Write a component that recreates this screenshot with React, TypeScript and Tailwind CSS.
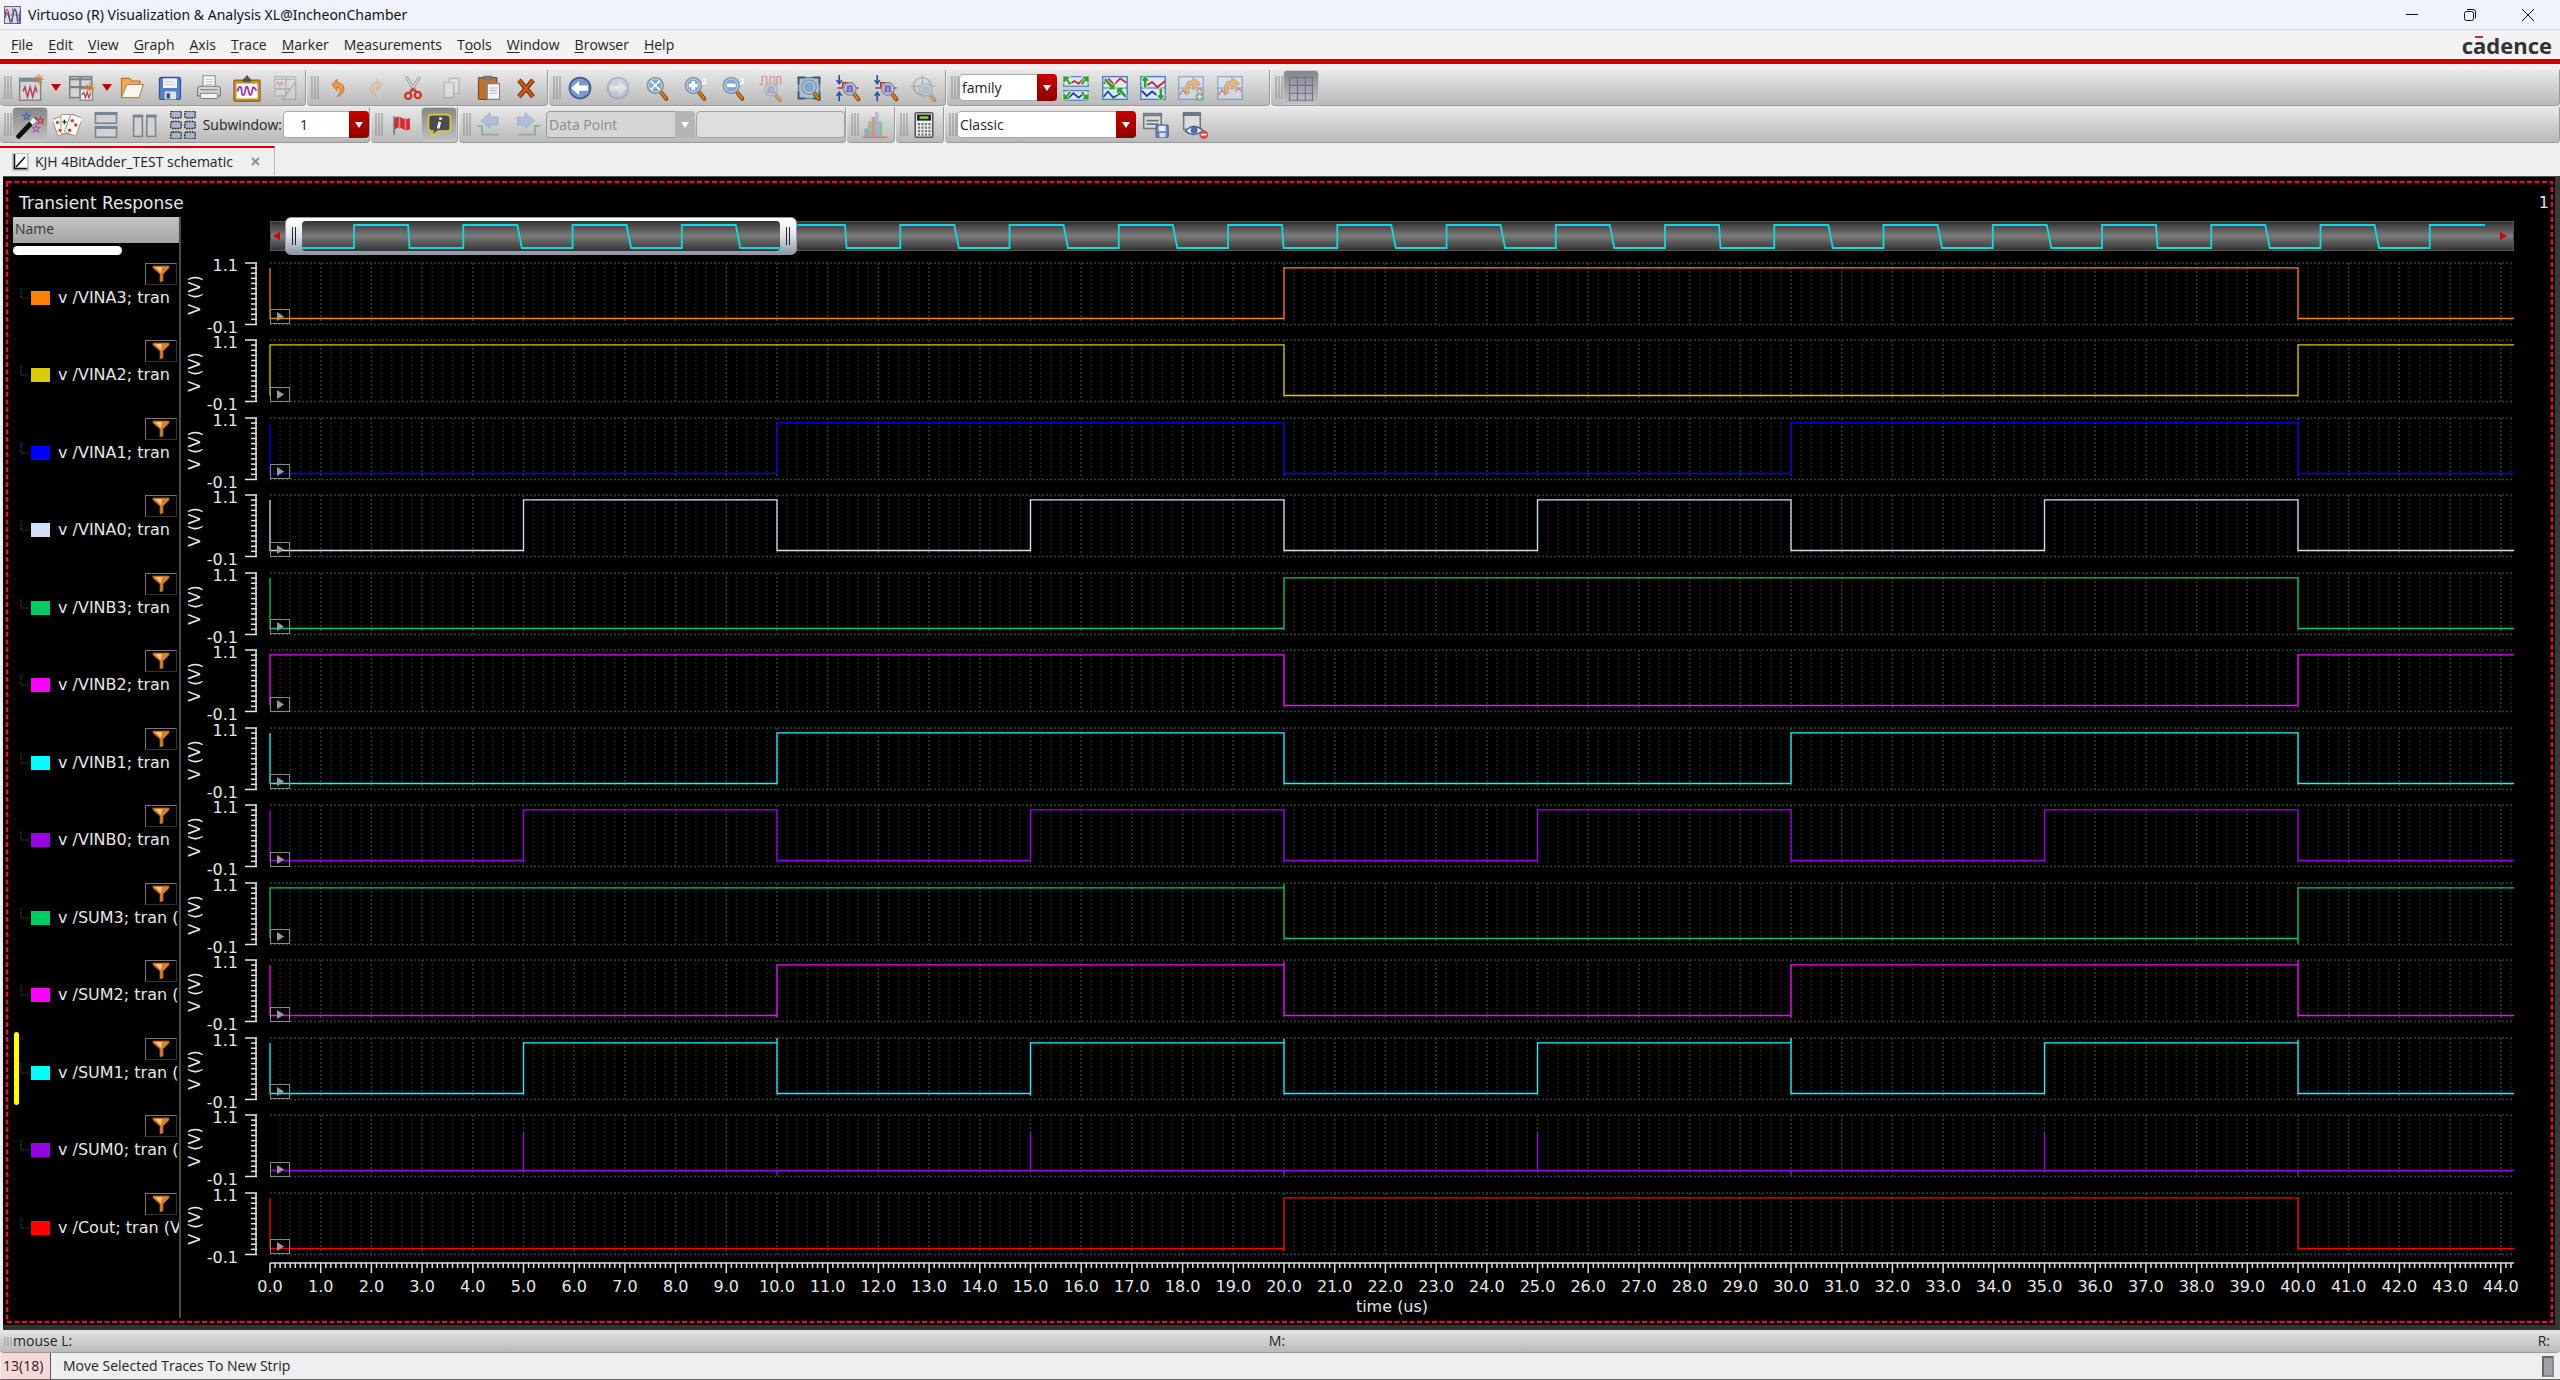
import React from 'react';

const SPAN = 44.26;

const menus = [
  ['', 'F', 'ile'],
  ['', 'E', 'dit'],
  ['', 'V', 'iew'],
  ['', 'G', 'raph'],
  ['', 'A', 'xis'],
  ['', 'T', 'race'],
  ['', 'M', 'arker'],
  ['M', 'e', 'asurements'],
  ['T', 'o', 'ols'],
  ['', 'W', 'indow'],
  ['', 'B', 'rowser'],
  ['', 'H', 'elp'],
];

type Signal = {
  name: string;
  color: string;
  start: 0 | 1;
  edges: number[];
  // [time, y from, y to]
  glitches?: number[][];
  selected?: boolean;
};

const by20 = [20, 40];
const by10 = [10, 20, 30, 40];
const by5 = [5, 10, 15, 20, 25, 30, 35, 40];

const signals: Signal[] = [
  { name: 'v /VINA3; tran', color: '#ff8000', start: 0, edges: by20 },
  { name: 'v /VINA2; tran', color: '#d8cc00', start: 1, edges: by20 },
  { name: 'v /VINA1; tran', color: '#0000ff', start: 0, edges: by10 },
  { name: 'v /VINA0; tran', color: '#d4e0f8', start: 0, edges: by5 },
  { name: 'v /VINB3; tran', color: '#00cc66', start: 0, edges: by20 },
  { name: 'v /VINB2; tran', color: '#ff00ff', start: 1, edges: by20 },
  { name: 'v /VINB1; tran', color: '#00ffff', start: 0, edges: by10 },
  { name: 'v /VINB0; tran', color: '#9900e6', start: 0, edges: by5 },
  { name: 'v /SUM3; tran (V)', color: '#00cc66', start: 1, edges: by20, glitches: [[20, 1, 56], [40, 5, 61]] },
  { name: 'v /SUM2; tran (V)', color: '#ff00ff', start: 0, edges: by10, glitches: [[10, 5, 58], [20, 2, 56], [30, 5, 58], [40, 0, 56]] },
  { name: 'v /SUM1; tran (V)', color: '#00ffff', start: 0, edges: by5, selected: true, glitches: [[10, 0, 56], [15, 5, 58], [20, 1, 56], [30, 0, 56], [40, 2, 56]] },
  { name: 'v /SUM0; tran (V)', color: '#9900e6', start: 0, edges: [], glitches: [[5, 18, 56], [10, 56, 61], [15, 18, 56], [20, 56, 61], [25, 18, 56], [30, 56, 61], [35, 18, 56], [40, 56, 61]] },
  { name: 'v /Cout; tran (V)', color: '#ff0000', start: 0, edges: by20, glitches: [[20, 5, 59]] },
];

const Lens = ({ cx = 14, cy = 13, r = 9, children }: { cx?: number; cy?: number; r?: number; children?: React.ReactNode }) => (
  <>
    <path d={`M${cx + r * 0.7} ${cy + r * 0.8}L${cx + r * 1.4} ${cy + r * 1.7}`} stroke="#7a3d05" strokeWidth="4.5" strokeLinecap="round" />
    <path d={`M${cx + r * 0.75} ${cy + r * 0.85}L${cx + r * 1.35} ${cy + r * 1.65}`} stroke="#d9831f" strokeWidth="2.5" strokeLinecap="round" />
    <circle cx={cx} cy={cy} r={r} fill="#7fa6cf" stroke="#8a949e" strokeWidth="2" />
    <circle cx={cx} cy={cy} r={r - 1.5} fill="none" stroke="#d8e6f4" strokeWidth="1" />
    {children}
  </>
);

const Star = ({ x, y, c, r = 4 }: { x: number; y: number; c: string; r?: number }) => (
  <path
    transform={`translate(${x} ${y}) scale(${r / 4})`}
    d="M0-4L1.1-1.2 4-1.2 1.8.7 2.6 3.6 0 1.9-2.6 3.6-1.8.7-4-1.2-1.1-1.2Z"
    fill="none" stroke={c} strokeWidth="1.3"
  />
);

const Burst = ({ x, y }: { x: number; y: number }) => (
  <path transform={`translate(${x} ${y})`} d="M0-6V6M-6 0H6M-4-4L4 4M4-4L-4 4" stroke="#d97b2e" strokeWidth="1.2" />
);

const WavePanel = () => (
  <>
    <rect x="2" y="3" width="28" height="26" fill="#d9e8fb" stroke="#4d7fc4" strokeWidth="1.6" />
    <path d="M2 16H30" stroke="#4d7fc4" strokeWidth="1.4" />
  </>
);

const icons: Record<string, React.ReactNode> = {
  newWindow: (
    <>
      <rect x="3" y="5" width="24" height="25" fill="#d5d5d5" stroke="#7b8289" strokeWidth="1.6" />
      <rect x="3" y="5" width="24" height="4" fill="#7b8b98" />
      <path d="M7 20l2-5 3 11 3-11 3 11 3-11 2 6" fill="none" stroke="#b6405f" strokeWidth="1.8" />
      <Burst x={25} y={6} />
    </>
  ),
  newSub: (
    <>
      <rect x="2" y="3" width="25" height="24" fill="#d5d5d5" stroke="#7b8289" strokeWidth="1.8" />
      <path d="M2 6H27M2 15H27M14 3V27" stroke="#7b8289" strokeWidth="2.4" />
      <rect x="14" y="17" width="14" height="13" fill="#ececec" stroke="#7b8289" strokeWidth="1.4" />
      <path d="M16 24l2-3 2 6 2-6 2 6 2-5" fill="none" stroke="#b6405f" strokeWidth="1.5" />
      <Burst x={25} y={16} />
    </>
  ),
  open: (
    <>
      <path d="M4 26V5h9l3 3h9v5" fill="#f0aa55" stroke="#c0701c" strokeWidth="1.4" />
      <path d="M4 27L10 12H29L24 27Z" fill="#fbf7ef" stroke="#a98a62" strokeWidth="1.3" />
    </>
  ),
  save: (
    <>
      <rect x="4" y="4" width="24" height="25" rx="2" fill="#5b7fc4" stroke="#35539a" strokeWidth="1.5" />
      <rect x="8" y="5" width="16" height="11" fill="#f2f5fb" />
      <path d="M10 9H22M10 12H22" stroke="#c0c8da" />
      <rect x="10" y="20" width="13" height="9" fill="#dfe4ee" />
      <rect x="12" y="22" width="4" height="6" fill="#35539a" />
    </>
  ),
  print: (
    <>
      <path d="M9 16V2H23V16" fill="#fafafa" stroke="#8b8b8b" strokeWidth="1.3" />
      <path d="M12 6H20M12 9H20M12 12H20" stroke="#b4b4b4" />
      <path d="M3 17Q3 14 7 14H25Q29 14 29 17V25H3Z" fill="#d5d5d5" stroke="#7a7a7a" strokeWidth="1.4" />
      <rect x="6" y="22" width="20" height="6" rx="2" fill="#f4f4f4" stroke="#7a7a7a" strokeWidth="1.2" />
      <path d="M6 18H26" stroke="#8b8b8b" strokeWidth="1.4" />
    </>
  ),
  clipWave: (
    <>
      <rect x="1" y="7" width="30" height="24" rx="1" fill="#c98f2b" stroke="#8a5c12" strokeWidth="1.2" />
      <rect x="4" y="11" width="24" height="17" fill="#fff" />
      <path d="M11 9Q11 5 14 4 16-1 18 4 21 5 21 9Z" fill="#555" />
      <path d="M5 20c2-9 5-5 5 0s3 6 4-1 3-5 4 1 3 5 4-1 2-4 5 0" fill="none" stroke="#a03fae" strokeWidth="2.2" />
    </>
  ),
  editOff: (
    <g opacity="0.5">
      <rect x="3" y="3" width="24" height="22" fill="#e0e0e0" stroke="#999" strokeWidth="1.4" />
      <path d="M3 6H27M3 17H27M16 3V25" stroke="#999" strokeWidth="1.8" />
      <path d="M5 12l2-3 2 5 2-5 2 4" fill="none" stroke="#c65a74" strokeWidth="1.3" />
      <path d="M12 29L27 9V29Z" fill="#d8d8d8" stroke="#8a8a8a" strokeWidth="1.4" />
    </g>
  ),
  undo: <path d="M9 12L15 6V10C25 10 26 22 15 26 21 20 19 15 15 15V19Z" fill="#f0994a" stroke="#c76a1a" strokeWidth="1" />,
  redo: <path opacity="0.45" d="M23 12L17 6V10C7 10 6 22 17 26 11 20 13 15 17 15V19Z" fill="#f0b482" stroke="#d08a55" strokeWidth="1" />,
  cut: (
    <>
      <path d="M8 3L19 20M24 3L13 20" stroke="#8f9499" strokeWidth="3.4" />
      <path d="M8 3L19 20M24 3L13 20" stroke="#e6e8ea" strokeWidth="1.4" />
      <circle cx="10.5" cy="25" r="3.5" fill="none" stroke="#d03025" strokeWidth="2.6" />
      <circle cx="21.5" cy="24" r="3.5" fill="none" stroke="#d03025" strokeWidth="2.6" />
      <path d="M12 22L16 17L20 21" stroke="#d03025" strokeWidth="2.4" fill="none" />
    </>
  ),
  copy: (
    <g opacity="0.55">
      <path d="M14 5H25V22H14Z" fill="#e9e9e9" stroke="#999" strokeWidth="1.4" />
      <path d="M8 10H19V27H8Z" fill="#e9e9e9" stroke="#999" strokeWidth="1.4" />
    </g>
  ),
  paste: (
    <>
      <rect x="4" y="4" width="21" height="25" rx="1" fill="#b87430" stroke="#7d4b17" strokeWidth="1.4" />
      <rect x="9" y="2" width="11" height="5" rx="1" fill="#777" />
      <path d="M14 11H28V29H14Z" fill="#f5f5f5" stroke="#808080" strokeWidth="1.2" />
      <path d="M17 16H25M17 19H25M17 22H25" stroke="#aaa" />
    </>
  ),
  remove: (
    <>
      <path d="M8 7L24 26M24 7L8 26" stroke="#7c2d08" strokeWidth="5.5" />
      <path d="M8 7L24 26M24 7L8 26" stroke="#c85a1c" strokeWidth="3" />
    </>
  ),
  back: (
    <>
      <circle cx="16" cy="16" r="12" fill="#7f98c6" stroke="#3f5d98" strokeWidth="2" />
      <path d="M6 16L15 8V13H25V19H15V24Z" fill="#fff" />
    </>
  ),
  forward: (
    <g opacity="0.4">
      <circle cx="16" cy="16" r="12" fill="#b4c2dc" stroke="#6c83b0" strokeWidth="2" />
      <path d="M26 16L17 8V13H7V19H17V24Z" fill="#fff" />
    </g>
  ),
  zoomFit: (
    <Lens>
      <path d="M9 8L12 11M19 8L16 11M9 18L12 15M19 18L16 15" stroke="#fff" strokeWidth="2.2" />
      <rect x="12" y="11" width="4" height="4" fill="#fff" />
    </Lens>
  ),
  zoomIn: (
    <>
      <Lens><path d="M14 8V18M9 13H19" stroke="#fff" strokeWidth="4" /></Lens>
      <path d="M25 6Q29 4 28 8L25 11H29" fill="none" stroke="#fff" strokeWidth="1.5" />
    </>
  ),
  zoomOut: (
    <>
      <Lens><path d="M9 13H19" stroke="#fff" strokeWidth="4" /></Lens>
      <path d="M25 6Q29 4 28 8L25 11H29" fill="none" stroke="#fff" strokeWidth="1.5" />
    </>
  ),
  zoomWaveOff: (
    <g opacity="0.45">
      <path d="M3 12H6V3H11V12H15V3H20V12H23V3H27V12" fill="none" stroke="#c64a4a" strokeWidth="1.6" />
      <Lens cx={16} cy={18} r={7}><path d="M12 21H14V15H18V21H20" fill="none" stroke="#c64a8a" strokeWidth="1.4" /></Lens>
    </g>
  ),
  zoomBox: (
    <>
      <rect x="4" y="4" width="24" height="24" fill="#aebfd2" />
      <path d="M4 12V4H12M20 4H28V12M28 20V28H20M12 28H4V20" fill="none" stroke="#3c536d" strokeWidth="2.2" />
      <path d="M9 4H23M4 9V23M28 9V23M9 28H23" stroke="#5a718b" strokeWidth="1.4" />
      <Lens cx={16} cy={15} r={8} />
    </>
  ),
  zoomY: (
    <>
      <path d="M6 1V9M3 7L6 11L9 7M6 31V23M3 25L6 21L9 25" fill="none" stroke="#17509c" strokeWidth="1.8" />
      <path d="M4 16H10V10H20V16H28" fill="none" stroke="#c22a2a" strokeWidth="1.8" />
      <Lens cx={18} cy={17} r={7}><path d="M14 20H16V14H20V20H22" fill="none" stroke="#b02fa0" strokeWidth="1.4" /></Lens>
    </>
  ),
  zoomTarget: (
    <g opacity="0.42">
      <circle cx="14" cy="14" r="10" fill="none" stroke="#777" strokeWidth="1.8" />
      <path d="M14 1V28M1 14H28" stroke="#777" strokeWidth="1.6" />
      <Lens cx={18} cy={18} r={7} />
    </g>
  ),
  expand: (
    <>
      <rect x="2" y="3" width="28" height="11" fill="#d9e8fb" stroke="#4d7fc4" strokeWidth="1.4" />
      <rect x="2" y="19" width="28" height="11" fill="#d9e8fb" stroke="#4d7fc4" strokeWidth="1.4" />
      <path d="M8 12L14 8L19 11L24 6" fill="none" stroke="#d32432" strokeWidth="2" />
      <path d="M8 27L13 22L19 27L24 23" fill="none" stroke="#1f3f95" strokeWidth="2" />
      <path d="M1 2L10 3L7 6L11 11L8 13L5 8L1 11ZM31 2L22 3L25 6L21 11L24 13L27 8L31 11ZM1 30L10 29L7 26L11 21L8 19L5 24L1 21ZM31 30L22 29L25 26L21 21L24 19L27 24L31 21Z" fill="#2fa32a" stroke="#eafbe8" strokeWidth="0.8" />
    </>
  ),
  merge: (
    <>
      <WavePanel />
      <path d="M3 11L9 6L15 12L22 5L29 10" fill="none" stroke="#d32432" strokeWidth="2" />
      <path d="M3 26L8 20L14 27L22 22L29 26" fill="none" stroke="#1f3f95" strokeWidth="2" />
      <path d="M5 4L13 12L16 9V18H7L10 15L3 7ZM28 28L21 21L18 24V15H27L24 18L30 25Z" fill="#2fa32a" stroke="#eafbe8" strokeWidth="0.8" />
    </>
  ),
  split: (
    <>
      <WavePanel />
      <path d="M9 13L15 9L21 15L30 8" fill="none" stroke="#d32432" strokeWidth="2.2" />
      <path d="M3 19L9 25L15 20L20 24" fill="none" stroke="#1f3f95" strokeWidth="2.2" />
      <path d="M7 1L12 8H9V16H5V8H2ZM25 31L20 24H23V16H27V24H30Z" fill="#2fa32a" stroke="#eafbe8" strokeWidth="0.8" />
    </>
  ),
  addStrip: (
    <g opacity="0.5">
      <WavePanel />
      <path d="M3 24L7 18L11 24M22 20L26 16L29 20" fill="none" stroke="#c03a4a" strokeWidth="1.6" />
      <path d="M10 22Q8 6 18 8V3L27 11L18 18V13Q12 12 14 22Z" fill="#e8962f" stroke="#b86a15" />
      <circle cx="26" cy="26" r="5" fill="#3d9a3a" />
      <path d="M26 23V29M23 26H29" stroke="#fff" strokeWidth="1.8" />
    </g>
  ),
  redoStrip: (
    <g opacity="0.5">
      <WavePanel />
      <path d="M3 24L7 18L11 24M22 20L26 16L29 20" fill="none" stroke="#c03a4a" strokeWidth="1.6" />
      <path d="M10 22Q8 6 18 8V3L27 11L18 18V13Q12 12 14 22Z" fill="#e8962f" stroke="#b86a15" />
    </g>
  ),
  grid: <path d="M3 3V31M12 3V31M21 3V31M29 3V31M2 4H30M2 13H30M2 22H30M2 30H30" stroke="#6c6c9c" strokeWidth="1.2" />,
  wand: (
    <>
      <path d="M3 29L21 10" stroke="#111" strokeWidth="5.5" strokeLinecap="round" />
      <path d="M17 14L22 9" stroke="#eee" strokeWidth="5.5" />
      <Star x={12} y={6} c="#3b63c9" />
      <Star x={28} y={11} c="#d33a4a" />
      <Star x={23} y={20} c="#b34fc0" />
    </>
  ),
  cards: (
    <>
      <rect x="2" y="7" width="14" height="20" rx="1" transform="rotate(-20 9 17)" fill="#fbfaf4" stroke="#8d8d80" />
      <rect x="9" y="4" width="15" height="22" rx="1" fill="#fbfaf4" stroke="#8d8d80" />
      <rect x="16" y="5" width="14" height="22" rx="1" transform="rotate(20 23 17)" fill="#fbfaf4" stroke="#8d8d80" />
      <circle cx="5" cy="13" r="1.8" fill="#d43c35" />
      <circle cx="8" cy="22" r="1.8" fill="#d43c35" />
      <path d="M13 10V15M11 12.5H15.500" stroke="#222" strokeWidth="1.4" />
      <circle cx="22" cy="11" r="2" fill="#d43c35" />
      <circle cx="26" cy="16" r="2" fill="#d43c35" />
      <circle cx="19" cy="22" r="2" fill="#d43c35" />
    </>
  ),
  rows: (
    <>
      <rect x="4" y="2" width="24" height="12" fill="#d2d2d2" stroke="#7c858d" strokeWidth="1.8" />
      <rect x="4" y="18" width="24" height="12" fill="#d2d2d2" stroke="#7c858d" strokeWidth="1.8" />
      <path d="M3 3H29M3 19H29" stroke="#71869a" strokeWidth="3" />
    </>
  ),
  columns: (
    <>
      <rect x="3" y="5" width="10" height="24" fill="#d2d2d2" stroke="#7c858d" strokeWidth="1.8" />
      <rect x="18" y="5" width="10" height="24" fill="#d2d2d2" stroke="#7c858d" strokeWidth="1.8" />
      <path d="M2 6H14M17 6H29" stroke="#71869a" strokeWidth="3" />
    </>
  ),
  tiles: (
    <>
      {[0, 12, 24].map((y) => [2, 18].map((x) => (
        <rect key={`${x}-${y}`} x={x} y={y} width="12" height="8" rx="2" fill="#a9b4cb" stroke="#222" strokeWidth="1.5" strokeDasharray="2 1" />
      )))}
    </>
  ),
  flag: (
    <>
      <path d="M7 6V27" stroke="#777" strokeWidth="2" />
      <path d="M8 8Q12 5 16 8T25 8V21Q20 23 16 20T8 21Z" fill="#d02c33" />
      <path d="M13 7V20M20 8V21" stroke="#ea7a7d" strokeWidth="2" />
    </>
  ),
  info: (
    <>
      <path d="M8 4H25Q29 4 29 8V19Q29 23 25 23H15L7 29L9 23Q4 23 4 19V8Q4 4 8 4Z" fill="#4b4b4b" stroke="#d8cb35" strokeWidth="2" />
      <path d="M18 7.500L17.400 10M17 12.500L15 20" stroke="#fff" strokeWidth="3" />
    </>
  ),
  prevPoint: (
    <g opacity="0.65">
      <path d="M6 11L16 2V7H25V16H16V20Z" fill="#9fb0d8" stroke="#7e92c2" />
      <path d="M1 17H7V27H26" fill="none" stroke="#5eae66" strokeWidth="2" />
    </g>
  ),
  nextPoint: (
    <g opacity="0.65">
      <path d="M24 11L14 2V7H5V16H14V20Z" fill="#9fb0d8" stroke="#7e92c2" />
      <path d="M31 17H25V27H6" fill="none" stroke="#5eae66" strokeWidth="2" />
    </g>
  ),
  histogram: (
    <g opacity="0.5">
      <rect x="4" y="20" width="4" height="9" fill="#6b7fd0" />
      <rect x="8" y="12" width="4" height="17" fill="#54b860" />
      <rect x="12" y="7" width="4" height="22" fill="#d65a5a" />
      <rect x="16" y="1" width="4" height="28" fill="#8a94d8" />
      <rect x="20" y="12" width="4" height="17" fill="#54b860" />
      <path d="M2 30H30" stroke="#c44" strokeWidth="2" />
    </g>
  ),
  calculator: (
    <>
      <rect x="6" y="2" width="20" height="28" rx="1" fill="#efefef" stroke="#555" strokeWidth="1.8" />
      <rect x="8" y="4" width="16" height="7" fill="#222" />
      <path d="M11 6H21V9H11Z" fill="#7fd02a" />
      <path d="M9 15H24M9 19H24M9 23H24M9 27H24" stroke="#777" strokeWidth="2.5" strokeDasharray="2.5 1.5" />
    </>
  ),
  saveSet: (
    <>
      <rect x="2" y="3" width="20" height="17" fill="#dcdcdc" stroke="#777" strokeWidth="1.8" />
      <path d="M2 5H22M5 11H19M5 15H19" stroke="#6b7680" strokeWidth="2.2" />
      <rect x="16" y="16" width="14" height="14" rx="1" fill="#6f80b4" stroke="#44558c" />
      <rect x="19" y="17" width="8" height="6" fill="#e8ecf6" />
      <rect x="20" y="25" width="7" height="5" fill="#d7dcea" />
    </>
  ),
  hideSet: (
    <>
      <rect x="3" y="2" width="19" height="19" fill="#dcdcdc" stroke="#777" strokeWidth="1.8" />
      <path d="M2 4H23" stroke="#66788a" strokeWidth="3.5" />
      <path d="M5 23Q14 13 25 22Q15 31 5 23Z" fill="#f4f6fa" stroke="#3f5d98" strokeWidth="1.6" />
      <circle cx="15" cy="22" r="4" fill="#4d6cab" />
      <circle cx="26" cy="27" r="5" fill="#d94a4a" />
      <path d="M23 27H29" stroke="#fff" strokeWidth="2" />
    </>
  ),
};

const Tool = ({ name, label, pressed = false }: { name: string; label: string; pressed?: boolean }) => (
  <button
    type="button"
    aria-label={label}
    className={pressed
      ? 'flex h-[35px] w-9 shrink-0 items-center justify-center rounded-sm border border-[#c9c9c9] bg-linear-to-b from-[#878787] to-[#c2c2c2]'
      : 'flex h-[35px] min-w-0 flex-1 items-center justify-center'}
  >
    <svg viewBox="0 0 32 32" className="h-7 w-7" fill="none">{icons[name]}</svg>
  </button>
);

const Drop = ({ label }: { label: string }) => (
  <button type="button" aria-label={label} className="flex h-[35px] w-3 shrink-0 items-center justify-center">
    <svg viewBox="0 0 10 7" className="h-[7px] w-[10px]"><path d="M0 0H10L5 7Z" fill="#c00000" /></svg>
  </button>
);

const Group = ({ size, children }: { size: string; children?: React.ReactNode }) => (
  <div className={`flex h-9 items-center rounded-b border-r border-b border-[#999] bg-linear-to-b from-[#e9e9e9] to-[#b9b9b9] pl-1 ${size}`}>
    <svg viewBox="0 0 8 23" className="h-[23px] w-2 shrink-0"><path d="M1 0V23M4 0V23M7 0V23" stroke="#8d8d8d" /></svg>
    {children}
  </div>
);

const Combo = ({ label, value, size, indent = 'pl-[2px]', disabled = false }: { label: string; value: string; size: string; indent?: string; disabled?: boolean }) => (
  <div className={`relative h-[27px] shrink-0 ${size}`}>
    <select
      aria-label={label}
      disabled={disabled}
      className={`h-full w-full appearance-none rounded border text-sm ${indent} ${disabled ? 'border-[#999] bg-[#d6d6d6] text-[#8a8a8a]' : 'border-[#aaa] bg-white text-[#222]'}`}
    >
      <option>{value}</option>
    </select>
    <span className={`pointer-events-none absolute inset-y-0 right-0 flex w-5 items-center justify-center rounded-r ${disabled ? 'bg-[#b5b5b5]' : 'bg-linear-to-b from-[#c80000] to-[#8e0000]'}`}>
      <svg viewBox="0 0 8 6" className="h-[6px] w-2"><path d="M0 0H8L4 6Z" fill="#fff" /></svg>
    </span>
  </div>
);

const Toolbars = () => (
  <div className="flex flex-col gap-px bg-[#efefef] pt-[6px] pb-[3px]">
    <div className="flex gap-px">
      <Group size="w-[306px]">
        <Tool name="newWindow" label="New window" />
        <Drop label="New window options" />
        <Tool name="newSub" label="New subwindow" />
        <Drop label="New subwindow options" />
        <Tool name="open" label="Open" />
        <Tool name="save" label="Save" />
        <Tool name="print" label="Print" />
        <Tool name="clipWave" label="Save image" />
        <Tool name="editOff" label="Edit graph" />
      </Group>
      <Group size="w-[241px] pr-[2px]">
        <Tool name="undo" label="Undo" />
        <Tool name="redo" label="Redo" />
        <Tool name="cut" label="Cut" />
        <Tool name="copy" label="Copy" />
        <Tool name="paste" label="Paste" />
        <Tool name="remove" label="Delete" />
      </Group>
      <Group size="w-[397px] pr-[2px]">
        <Tool name="back" label="Previous view" />
        <Tool name="forward" label="Next view" />
        <Tool name="zoomFit" label="Fit" />
        <Tool name="zoomIn" label="Zoom in" />
        <Tool name="zoomOut" label="Zoom out" />
        <Tool name="zoomWaveOff" label="Zoom trace" />
        <Tool name="zoomBox" label="Zoom area" />
        <Tool name="zoomY" label="Zoom Y" />
        <Tool name="zoomY" label="Zoom Y to data" />
        <Tool name="zoomTarget" label="Zoom to marker" />
      </Group>
      <Group size="w-[323px] pr-5">
        <Combo label="Strip mode" value="family" size="w-[98px]" />
        <Tool name="expand" label="Split all strips" />
        <Tool name="merge" label="Combine strips" />
        <Tool name="split" label="Split current strip" />
        <Tool name="addStrip" label="Copy to new strip" />
        <Tool name="redoStrip" label="Move to new strip" />
      </Group>
      <Group size="flex-1">
        <Tool name="grid" label="Grid" pressed />
      </Group>
    </div>
    <div className="flex gap-px">
      <Group size="w-[370px]">
        <Tool name="wand" label="Auto layout" pressed />
        <Tool name="cards" label="Card layout" />
        <Tool name="rows" label="Horizontal layout" />
        <Tool name="columns" label="Vertical layout" />
        <Tool name="tiles" label="Grid layout" />
        <span className="mr-px text-sm text-[#222]">Subwindow:</span>
        <Combo label="Subwindow" value="1" size="w-[86px]" indent="pl-4" />
      </Group>
      <Group size="w-[87px]">
        <Tool name="flag" label="Marker" />
        <Tool name="info" label="Info balloon" pressed />
      </Group>
      <Group size="w-[387px]">
        <Tool name="prevPoint" label="Previous point" />
        <Tool name="nextPoint" label="Next point" />
        <Combo label="Point type" value="Data Point" size="w-[149px]" disabled />
        <input aria-label="Point value" disabled className="ml-px h-[27px] w-[149px] rounded border border-[#a5a5a5] bg-[#dedede]" />
      </Group>
      <Group size="w-12 pr-1">
        <Tool name="histogram" label="Histogram" />
      </Group>
      <Group size="w-12 pr-1">
        <Tool name="calculator" label="Calculator" />
      </Group>
      <Group size="flex-1">
        <Combo label="Workspace" value="Classic" size="w-[179px]" />
        <div className="flex w-[78px]">
          <Tool name="saveSet" label="Save workspace" />
          <Tool name="hideSet" label="Hide assistants" />
        </div>
      </Group>
    </div>
  </div>
);

// square wave, x in microseconds and y in strip units
const tracePath = (s: Signal) => {
  let level = s.start;
  const y = (l: number) => (l ? 5 : 56);
  let d = `M0 ${s.start ? 56 : 5}V${y(level)}`;
  if (s.name.includes('SUM0')) d = 'M0 56';
  s.edges.forEach((t) => {
    level = level ? 0 : 1;
    d += `H${t}V${y(level)}`;
  });
  d += `H${SPAN}`;
  (s.glitches ?? []).forEach(([t, a, b]) => {
    d += `M${t} ${a}V${b}`;
  });
  return d;
};

const gridPath = (major: boolean) => {
  let d = '';
  for (let i = 1; i * 0.2 < SPAN; i++) {
    if ((i % 5 === 0) === major) d += `M${(i * 0.2).toFixed(1)} 0V62`;
  }
  return d;
};

const Strip = ({ signal }: { signal: Signal }) => (
  <div className="flex min-h-14 flex-1 py-2">
    <div className="relative w-[88px] shrink-0">
      <svg className="absolute inset-0 h-full w-full overflow-visible font-['DejaVu_Sans',sans-serif] text-base" fill="#e6e6e6">
        <svg x="12" y="52%" className="overflow-visible">
          <text transform="rotate(-90)" textAnchor="middle" dominantBaseline="central">V (V)</text>
        </svg>
        <text x="56" y="2" textAnchor="end" dominantBaseline="central">1.1</text>
        <text x="56" y="100%" dy="3" textAnchor="end" dominantBaseline="central">-0.1</text>
        <g stroke="#e6e6e6" strokeWidth="1.5">
          <line x1="74" x2="74" y1="0" y2="100%" />
          {Array.from({ length: 13 }, (_, i) => (
            <line key={i} x1={i % 12 === 0 ? 63 : 69} x2="75" y1={`${(i / 12) * 100}%`} y2={`${(i / 12) * 100}%`} />
          ))}
        </g>
      </svg>
    </div>
    <div className="relative min-w-0 flex-1">
      <svg viewBox={`0 0 ${SPAN} 62`} preserveAspectRatio="none" className="absolute inset-0 h-full w-full overflow-visible" fill="none">
        <g strokeDasharray="2 2">
          <path d={gridPath(false)} stroke="#1e1e1e" strokeWidth="1.5" vectorEffect="non-scaling-stroke" />
          <path d={gridPath(true)} stroke="#383838" strokeWidth="1.5" vectorEffect="non-scaling-stroke" />
          <path d={`M0 0H${SPAN}M0 62H${SPAN}`} stroke="#3c3c3c" strokeWidth="1.5" vectorEffect="non-scaling-stroke" />
        </g>
        <path d={tracePath(signal)} stroke={signal.color} strokeWidth="1.3" vectorEffect="non-scaling-stroke" />
      </svg>
      <button type="button" aria-label="Expand strip" className="absolute bottom-0 left-0 flex h-[15px] w-5 items-center justify-center border border-[#888] pl-px">
        <svg viewBox="0 0 7 9" className="h-[9px] w-[7px]"><path d="M0 0L7 4.500L0 9Z" fill="#999" /></svg>
      </button>
    </div>
  </div>
);

const overviewPath = () => {
  let d = 'M31 27';
  for (let i = 0; i < 20; i++) {
    const rise = 84 + i * 109.2;
    d += `H${rise}V4`;
    if (i < 19) d += `H${rise + 54}L${rise + (i % 4 === 0 ? 55.5 : 58.5)} 27`;
  }
  return `${d}H2214`;
};

const Handle = () => (
  <span className="flex w-4 items-center justify-center gap-[2px]">
    <span className="h-[18px] w-px bg-[#222]" />
    <span className="h-[18px] w-px bg-[#222]" />
  </span>
);

const Overview = () => (
  <div className="relative mr-[41px] ml-[88px] h-[38px] py-1">
    <div className="h-[30px] border border-[#555] bg-linear-to-b from-[#333] via-[#7c7c7c] to-[#333]" />
    <div className="absolute inset-y-0 left-[15px] flex w-[22.8%] justify-between rounded-md border border-[#99a] bg-linear-to-b from-white via-[#dfe3ea] to-[#8c96a4]">
      <Handle />
      <div className="my-[3px] flex-1 rounded-sm bg-linear-to-b from-[#333] via-[#7c7c7c] to-[#333]" />
      <Handle />
    </div>
    <svg viewBox="0 0 2243 30" preserveAspectRatio="none" className="absolute top-1 left-0 h-[30px] w-full" fill="none">
      <defs>
        <clipPath id="outside-handles">
          <path d="M30 0H511V30H30ZM527 0H2243V30H527Z" />
        </clipPath>
      </defs>
      <path d={overviewPath()} stroke="#10dada" strokeWidth="1.8" clipPath="url(#outside-handles)" />
      <path d="M3 15L10 11V19ZM2236 15L2229 11V19Z" fill="#d00000" />
    </svg>
  </div>
);

const TimeAxis = () => {
  const at = (t: number) => `${(t / SPAN) * 100}%`;
  return (
    <svg className="mr-[41px] ml-[88px] block h-14 w-[calc(100%-129px)] overflow-visible font-['DejaVu_Sans',sans-serif] text-base" fill="#e6e6e6">
      <g stroke="#e0e0e0" strokeWidth="1.5">
        <line x1="0" x2="100%" y1="1" y2="1" />
        {Array.from({ length: 443 }, (_, i) => (
          <line key={i} x1={at(i / 10)} x2={at(i / 10)} y1="1" y2={i % 10 === 0 ? 11 : 6} />
        ))}
      </g>
      {Array.from({ length: 45 }, (_, i) => (
        <text key={i} x={at(i)} y="30" textAnchor="middle">{i.toFixed(1)}</text>
      ))}
      <text x="50%" y="50" textAnchor="middle">time (us)</text>
    </svg>
  );
};

const NamePanel = () => (
  <div className="flex w-[168px] shrink-0 flex-col border-r-2 border-[#4a4a4a]">
    <div className="flex h-[26px] items-center bg-linear-to-b from-[#c4c4c4] to-[#a4a4a4] pb-[2px] pl-[2px] text-sm text-[#333]">Name</div>
    <div className="mt-[3px] h-[9px] w-[109px] rounded-full bg-white" />
    <ul className="flex flex-1 flex-col">
      {signals.map((s) => (
        <li key={s.name} className="relative flex min-h-14 flex-1 flex-col pt-2">
          {s.selected && <span className="absolute inset-y-[2px] left-px w-[5px] rounded-full bg-[#ffff00]" />}
          <button type="button" aria-label="Filter" className="mr-[2px] flex h-[22px] w-8 items-center justify-center self-end border border-[#777] border-r-[#333] border-b-[#333]">
            <svg viewBox="0 0 18 18" className="h-[18px] w-[18px]">
              <path d="M1 1H17V3L11 9V16L8 17V9L1 3Z" fill="#d9822b" stroke="#a55a14" strokeWidth="0.8" />
              <path d="M3 2H10L9 8Z" fill="#f8c58a" />
            </svg>
          </button>
          <div className="mt-[3px] flex h-5 items-center overflow-hidden pl-[7px] whitespace-nowrap">
            <svg viewBox="0 0 8 14" className="h-[14px] w-2 shrink-0 self-start" fill="none"><path d="M1 0V10H8" stroke="#555" strokeDasharray="1 1" /></svg>
            <svg viewBox="0 0 19 14" className="ml-[3px] h-[14px] w-[19px] shrink-0"><rect width="19" height="14" fill={s.color} /></svg>
            <span className="ml-2 font-['DejaVu_Sans',sans-serif] text-base text-[#e6e6e6]">{s.name}</span>
          </div>
        </li>
      ))}
    </ul>
    <div className="h-14" />
  </div>
);

const App = () => (
  <div className="flex min-h-screen flex-col bg-[#efefef] font-['Open_Sans','Noto_Sans',sans-serif] text-sm text-[#222]">
    <header>
      <div className="flex h-[29px] items-center justify-between bg-[#eff3fb]">
        <h1 className="flex items-center gap-[7px] pl-1 font-['Noto_Sans',sans-serif] text-sm text-[#111]">
          <svg viewBox="0 0 17 18" className="h-[18px] w-[17px]" fill="none">
            <rect x="0.500" y="0.500" width="16" height="17" fill="#d7deea" stroke="#666" />
            <path d="M8.500 0V18M0 9H17" stroke="#8590a5" />
            <path d="M1 9Q3-2 5 9T9 9 13 9 16 9" stroke="#c62a3a" strokeWidth="1.2" />
            <path d="M1 12Q3 1 5 12T9 9 13 12 16 5" stroke="#3c4f96" />
          </svg>
          Virtuoso (R) Visualization &amp; Analysis XL@IncheonChamber
        </h1>
        <div className="flex pr-[3px]">
          <button type="button" aria-label="Minimize" className="flex w-[58px] justify-center">
            <svg viewBox="0 0 14 14" className="h-[14px] w-[14px]" fill="none" stroke="#111"><path d="M1 6.500H13" /></svg>
          </button>
          <button type="button" aria-label="Restore" className="flex w-[58px] justify-center">
            <svg viewBox="0 0 14 14" className="h-[14px] w-[14px]" fill="none" stroke="#111">
              <rect x="1.500" y="3.500" width="9" height="9" rx="2" />
              <path d="M4 1.500H10Q12.500 1.500 12.500 4V10.500" />
            </svg>
          </button>
          <button type="button" aria-label="Close" className="flex w-[58px] justify-center">
            <svg viewBox="0 0 14 14" className="h-[14px] w-[14px]" fill="none" stroke="#111"><path d="M1 1L13 13M13 1L1 13" /></svg>
          </button>
        </div>
      </div>
      <div className="flex h-[30px] items-center justify-between border-t border-[#d4d4d4] bg-[#f2f2f2] pr-2 pl-[11px]">
        <nav className="flex gap-[15px]">
          {menus.map(([a, key, b]) => (
            <button key={a + key + b} type="button">
              {a}<span className="underline underline-offset-2">{key}</span>{b}
            </button>
          ))}
        </nav>
        <span className="text-[22px] leading-6 font-bold text-[#333]">
          c<span className="relative">a<span className="absolute top-[6px] left-[2px] h-[2px] w-2 bg-[#e0202a]" /></span>dence
        </span>
      </div>
      <div className="h-[5px] bg-[#d10000]" />
      <Toolbars />
      <div className="flex h-[29px]">
        <div className="flex w-[275px] items-center border-t-2 border-r border-t-[#d10000] border-r-[#b8b8b8] pl-3">
          <svg viewBox="0 0 17 18" className="h-[18px] w-[17px]" fill="none">
            <rect width="17" height="18" fill="#c4c4c4" />
            <rect x="2" y="1" width="13" height="15" fill="#fff" />
            <path d="M2.500 1V15.500H15M4 14L13 4" stroke="#111" strokeWidth="1.5" />
          </svg>
          <span className="ml-[6px]">KJH 4BitAdder_TEST schematic</span>
          <button type="button" aria-label="Close tab" className="mr-[14px] ml-auto">
            <svg viewBox="0 0 9 9" className="h-[9px] w-[9px]"><path d="M1 1L8 8M8 1L1 8" stroke="#909090" strokeWidth="2" /></svg>
          </button>
        </div>
      </div>
    </header>

    <main className="relative mt-px ml-[3px] flex flex-1 flex-col border-t border-r-[5px] border-b-[5px] border-t-[#555] border-r-[#3a3a38] border-b-[#333] bg-black pb-[7px]">
      <svg className="pointer-events-none absolute top-[5px] left-1 h-[calc(100%-8px)] w-[calc(100%-7px)] overflow-visible">
        <rect width="100%" height="100%" fill="none" stroke="#e0102f" strokeWidth="2.5" strokeDasharray="5 2.5" />
      </svg>
      <div className="flex h-10 items-end justify-between pr-[6px] pb-[2px] pl-4 font-['DejaVu_Sans',sans-serif] text-[#e6e6e6]">
        <h2 className="text-[17px]">Transient Response</h2>
        <span className="text-base">1</span>
      </div>
      <div className="flex flex-1 pl-[10px]">
        <NamePanel />
        <div className="flex min-w-0 flex-1 flex-col pl-px">
          <Overview />
          <div className="mr-[41px] flex flex-1 flex-col">
            {signals.map((s) => <Strip key={s.name} signal={s} />)}
          </div>
          <TimeAxis />
        </div>
      </div>
    </main>

    <footer>
      <div className="grid h-[23px] grid-cols-3 items-center rounded-b border-b border-[#999] bg-linear-to-b from-[#e6e6e6] to-[#b9b9b9] pr-[10px] pl-1">
        <span className="flex items-center gap-px">
          <svg viewBox="0 0 8 9" className="h-[9px] w-2"><path d="M1 0V9M4 0V9M7 0V9" stroke="#999" /></svg>
          mouse L:
        </span>
        <span className="text-center">M:</span>
        <span className="text-right">R:</span>
      </div>
      <div className="flex h-[27px] items-center border-b border-[#666] pr-[6px] pl-px">
        <span className="flex h-full w-[50px] items-center border-r border-[#555] bg-[#f8d8d8] pl-[2px]">13(18)</span>
        <span className="ml-3">Move Selected Traces To New Strip</span>
        <span className="ml-auto h-[21px] w-3 border-2 border-t-[#666] border-r-[#888] border-b-[#888] border-l-[#666] bg-[#a0a0a6]" />
      </div>
    </footer>
  </div>
);

export default App;
